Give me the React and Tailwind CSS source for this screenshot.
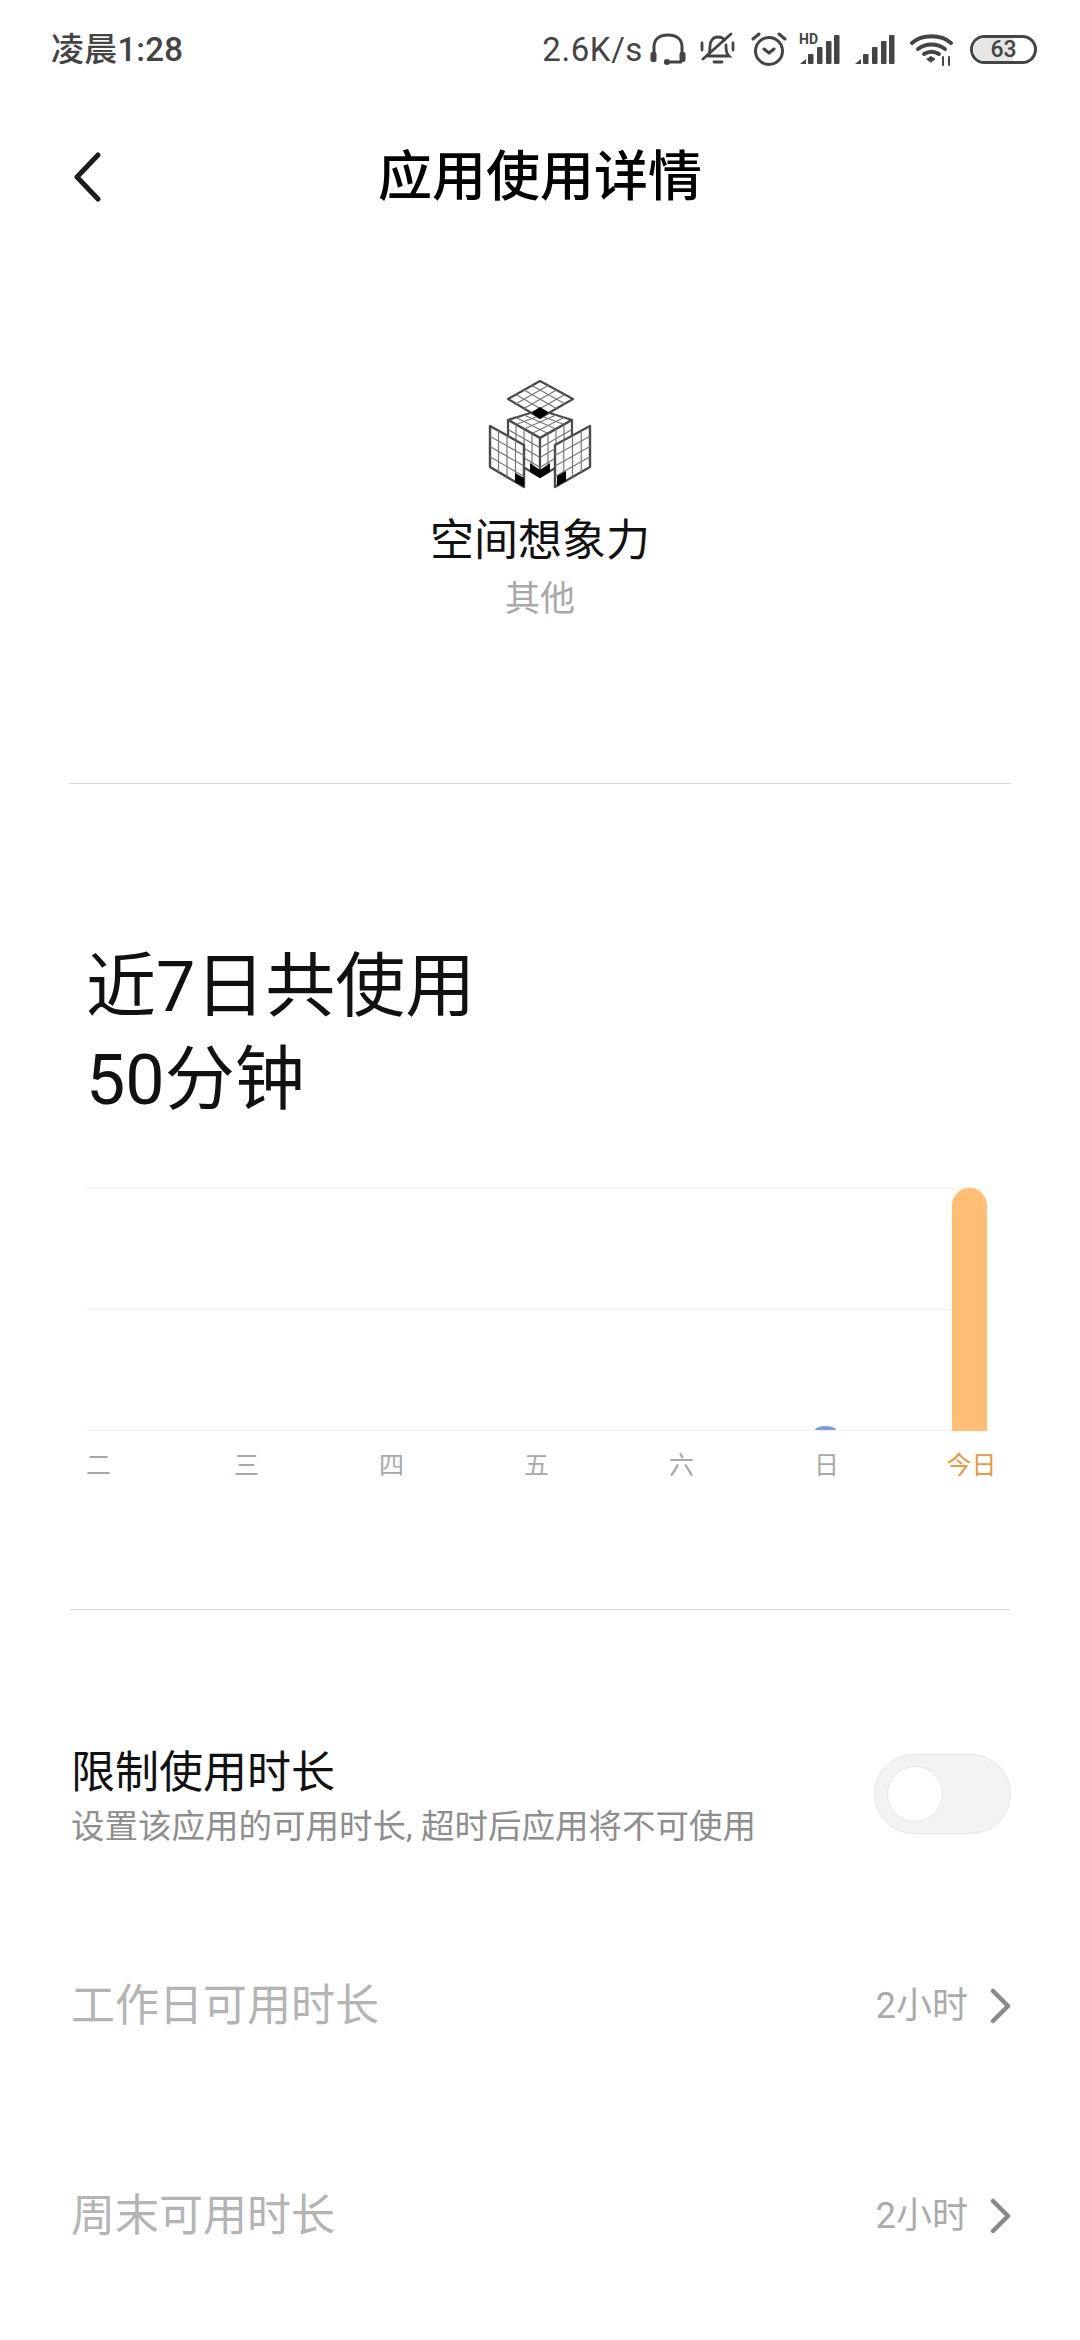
const FONT = "font-['Roboto','Noto_Sans_CJK_SC',sans-serif]";

function gridLines(a, b, c, d, n = 4) {
  const lerp = (p, q, t) => [p[0] + (q[0] - p[0]) * t, p[1] + (q[1] - p[1]) * t];
  const out = [];
  for (let i = 1; i < n; i++) {
    const t = i / n;
    out.push([lerp(a, b, t), lerp(d, c, t)]);
    out.push([lerp(a, d, t), lerp(b, c, t)]);
  }
  return out;
}

function Plane({ pts, sw = 2.2, inner = 1.2 }) {
  const [a, b, c, d] = pts;
  return (
    <g>
      <polygon points={pts.map((p) => p.join(",")).join(" ")} fill="#fff" stroke="#4a4a4a" strokeWidth={sw} strokeLinejoin="round" />
      {gridLines(a, b, c, d).map((l, i) => (
        <line key={i} x1={l[0][0]} y1={l[0][1]} x2={l[1][0]} y2={l[1][1]} stroke="#777" strokeWidth={inner} />
      ))}
    </g>
  );
}

function CubeIcon() {
  return (
    <svg width="104" height="110" viewBox="18 20 104 110">
      <Plane pts={[[70, 50], [102, 60], [70, 78], [38, 60]]} />
      <Plane pts={[[38, 60], [70, 78], [70, 117], [38, 98]]} />
      <Plane pts={[[70, 78], [102, 60], [102, 98], [70, 117]]} />
      <polygon points="60,103 70,110 80,103 80,112 70,118 60,112" fill="#000" />
      <Plane pts={[[70, 21], [103, 39], [70, 58], [38, 39]]} />
      <polygon points="70,47 79,52.500 70,59 61,52.500" fill="#000" />
      <Plane pts={[[20, 66], [54, 85], [54, 127], [20, 107]]} sw={2.4} />
      <polygon points="45,113 54,118 54,127 45,122" fill="#000" />
      <Plane pts={[[120, 66], [85, 85], [85, 127], [120, 107]]} sw={2.4} />
      <polygon points="87,116 96,111 96,121 87,126" fill="#000" />
    </svg>
  );
}

function Signal({ hd }) {
  return (
    <svg width="42" height="34" viewBox="0 0 42 34" className="shrink-0">
      {hd && (
        <text x="0" y="12" fontSize="14" fontWeight="700" fill="#444" fontFamily="Roboto, sans-serif">HD</text>
      )}
      <polygon points="1,32 7,27 7,32" fill="#444" />
      {[9, 18, 27, 35].map((x, i) => (
        <rect key={x} x={x} y={i === 0 ? 22 : i === 1 ? 15 : i === 2 ? 9 : 3} width="5.500" height={i === 0 ? 10 : i === 1 ? 17 : i === 2 ? 23 : 29} rx="1" fill="#444" />
      ))}
    </svg>
  );
}

function StatusBar() {
  return (
    <div className="h-[98px] flex items-center pl-[51px] text-[#444]">
      <span className="text-[33px] font-medium leading-none tracking-[0.2px]">凌晨1:28</span>
      <div className="ml-auto mr-[43px] flex items-center">
        <span className="text-[33px] leading-none tracking-[0.6px]">2.6K/s</span>
        <svg width="36" height="32" viewBox="0 0 36 32" className="ml-[7px]" fill="none" stroke="#444" strokeWidth="3">
          <path d="M4 21V14C4 6 10 2 18 2s14 4 14 12v7" />
          <rect x="0.500" y="19" width="6" height="10" rx="2" fill="#444" stroke="none" />
          <rect x="29.500" y="19" width="6" height="10" rx="2" fill="#444" stroke="none" />
          <path d="M14 29h18" />
          <circle cx="17" cy="29" r="3" fill="#444" stroke="none" />
        </svg>
        <svg width="36" height="34" viewBox="0 0 36 34" className="ml-[14px]" fill="none" stroke="#444" strokeWidth="2.800" strokeLinecap="round">
          <path d="M8 24c2-3 2-6 2-10 0-5 3-9 8-9 3 0 5 1 6.500 3M26 13v2c0 4 1 7 3 9H8" />
          <path d="M14 30h8" />
          <path d="M3 27L31 2" />
          <path d="M2 11v7M33 11v7" />
        </svg>
        <svg width="36" height="36" viewBox="0 0 36 36" className="ml-[15px]" fill="none" stroke="#444" strokeWidth="3" strokeLinecap="round" strokeLinejoin="round">
          <circle cx="18" cy="20" r="13.500" />
          <path d="M13 18l5 4 5-4" />
          <path d="M2 8l6-5M34 8l-6-5" />
        </svg>
        <div className="ml-[12px] flex items-center"><Signal hd /></div>
        <div className="ml-[13px] flex items-center"><Signal /></div>
        <svg width="44" height="34" viewBox="0 0 44 34" className="ml-[14px]" fill="none" stroke="#444" strokeWidth="3.800" strokeLinecap="round">
          <path d="M2 11C12 2 31 2 41 11" />
          <path d="M8 17c8-6 19-6 27 0" />
          <path d="M14 22c5-3 10-3 15 0" />
          <path d="M17 27l4-2.500 4 2.500-4 3z" fill="#444" strokeWidth="1" />
          <path d="M33 25v8M39 25v8" strokeWidth="2" />
        </svg>
        <div className="ml-[16px] relative w-[67px] h-[29px] rounded-full border-[3px] border-[#444] overflow-hidden flex items-center justify-center">
          <div className="absolute left-0 top-0 bottom-0 w-[66%] bg-[#e6e6e6]" />
          <span className="relative text-[23px] leading-none font-medium text-[#444]">63</span>
        </div>
      </div>
    </div>
  );
}

function Chevron({ className }) {
  return (
    <svg width="24" height="36" viewBox="0 0 24 36" fill="none" stroke="#8a8a8a" strokeWidth="4.500" strokeLinecap="round" strokeLinejoin="round" className={className}>
      <path d="M4 3l15 15L4 33" />
    </svg>
  );
}

function Row({ title }) {
  return (
    <div className="h-[210px] flex items-center pl-[71px] pr-[67px]">
      <span className="text-[44px] leading-none text-[#b4b4b4]">{title}</span>
      <span className="ml-auto text-[36px] leading-none text-[#ababab]">2小时</span>
      <Chevron className="ml-[21px]" />
    </div>
  );
}

export default function App() {
  const days = ["二", "三", "四", "五", "六", "日", "今日"];
  return (
    <div className={`w-[1080px] h-[2340px] bg-white overflow-hidden ${FONT}`}>
      <StatusBar />
      <div className="h-[158px] grid grid-cols-[1fr_auto_1fr] items-center">
        <svg width="30" height="50" viewBox="0 0 30 50" fill="none" stroke="#1c1c1c" strokeWidth="5" strokeLinecap="round" strokeLinejoin="round" className="ml-[73px]">
          <path d="M25 3L4 25l21 22" />
        </svg>
        <span className="text-[54px] font-medium leading-none text-black translate-y-[1px]">应用使用详情</span>
        <span />
      </div>

      <div className="mt-[124px] flex flex-col items-center">
        <CubeIcon />
        <div className="mt-[21px] text-[44px] leading-[60px] text-[#111]">空间想象力</div>
        <div className="mt-[5px] text-[35px] leading-[48px] text-[#a8a8a8]">其他</div>
      </div>

      <div className="mt-[159px] mx-[69px] h-px bg-[#d9d9d9]" />

      <div className="mt-[157px] pl-[86px] text-[70px] leading-[93px] text-[#111]">
        <div>近7日共使用</div>
        <div>50分钟</div>
      </div>

      <div className="mt-[61px] relative mx-[85px] w-[905px] h-[243px] flex flex-col justify-between">
        <div className="h-px bg-[#f3f3f3]" />
        <div className="h-px bg-[#f3f3f3]" />
        <div className="h-px bg-[#f1f1f1]" />
        <div className="absolute left-[867px] bottom-0 top-0 w-[35px] bg-[#ffbe73] rounded-t-full" />
        <div className="absolute left-[730px] bottom-[1px] w-[21px] h-[4px] bg-[#7e9bdc] rounded-[50%_50%_0_0/100%_100%_0_0]" />
      </div>

      <div className="mt-[19px] ml-[23px] grid grid-cols-[151px_repeat(6,145px)] h-[30px] items-center">
        {days.map((d, i) => (
          <span key={d} className={`text-center text-[25px] leading-none ${i === 6 ? "text-[#ea9a3f]" : "text-[#a8a8a8]"}`}>{d}</span>
        ))}
      </div>

      <div className="mt-[129px] mx-[70px] h-px bg-[#d9d9d9]" />

      <div className="mt-[144px] h-[80px] flex items-start pl-[71px] pr-[69px]">
        <div className="flex-1">
          <div className="text-[44px] leading-[44px] text-[#111] -mt-[3px]">限制使用时长</div>
          <div className="mt-[14px] text-[33.500px] leading-[36px] text-[#8e8e8e]">设置该应用的可用时长, 超时后应用将不可使用</div>
        </div>
        <div className="w-[137px] h-[80px] rounded-full bg-[#f3f3f3] border border-[#e6e6e6] flex items-center pl-[12px]">
          <div className="w-[56px] h-[56px] rounded-full bg-white border border-[#e6e6e6]" />
        </div>
      </div>

      <div className="mt-[67px]">
        <Row title="工作日可用时长" />
        <Row title="周末可用时长" />
      </div>
    </div>
  );
}
